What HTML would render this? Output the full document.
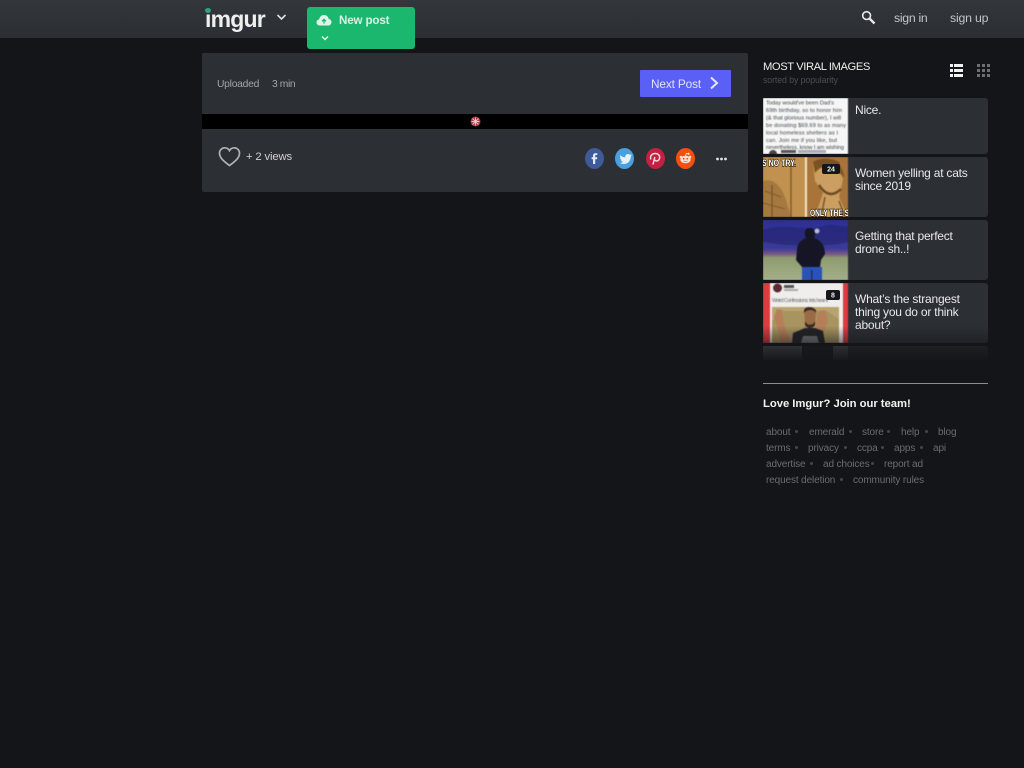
<!DOCTYPE html>
<html><head><meta charset="utf-8"><title>imgur</title>
<style>
html,body{margin:0;padding:0;width:1024px;height:768px;overflow:hidden;background:#141518;font-family:"Liberation Sans",sans-serif}
.a{position:absolute;white-space:nowrap}
svg{position:absolute;display:block}
.card{position:absolute;left:763px;width:225px;background:#2c2f34;border-radius:0 3px 3px 0;overflow:hidden}
.t{position:absolute;left:92px;top:5px;font-size:12px;line-height:13px;color:#e8e9ea;letter-spacing:-.22px;white-space:nowrap}
.f{font-size:10px;color:#6a6c70;letter-spacing:-.12px;line-height:13px}
.d{position:absolute;width:3px;height:3px;border-radius:50%;background:#44464a}
.b{filter:blur(.4px)}
</style></head><body>
<div class="a" style="left:0;top:0;width:1024px;height:38px;background:linear-gradient(#33363b,#2b2e33)"></div>

<!-- logo -->
<div class="a" style="left:205px;top:6px;font-size:23px;font-weight:bold;color:#eef0ee;letter-spacing:-.8px;line-height:26px">imgur</div>
<div class="a" style="left:205px;top:8px;width:6px;height:5px;border-radius:50%;background:#2fa37a"></div>
<svg style="left:276px;top:13px" width="11" height="9" viewBox="0 0 11 9"><path d="M1.5 2 L5.5 6 L9.5 2" fill="none" stroke="#dfe0e1" stroke-width="1.6"/></svg>

<!-- new post -->
<div class="a" style="left:307px;top:7px;width:108px;height:42px;background:#1bb76e;border-radius:3px"></div>
<svg style="left:316px;top:14px" width="16" height="12" viewBox="0 0 16 12"><path d="M4 11.5C1.7 11.5.5 10 .5 8.4.5 6.8 1.6 5.6 3.1 5.4 3.6 2.7 5.6 1 8 1c2.400 0 4.300 1.600 4.800 4 1.600.1 2.700 1.500 2.700 3.100 0 1.800-1.300 3.400-3.300 3.400z" fill="#dff3e8"/><path d="M8 9.500V5.500M6 7.300L8 5.300 10 7.300" fill="none" stroke="#1bb76e" stroke-width="1.300"/></svg>
<div class="a" style="left:339px;top:13px;font-size:11.6px;font-weight:bold;color:#d9f2e4;line-height:15px;letter-spacing:-.15px">New post</div>
<svg style="left:321px;top:35px" width="8" height="7" viewBox="0 0 8 7"><path d="M1 1.500L4 4.500 7 1.500" fill="none" stroke="#e6f6ee" stroke-width="1.400"/></svg>

<!-- top right -->
<svg style="left:861px;top:10px" width="15" height="15" viewBox="0 0 15 15"><circle cx="5.600" cy="5.600" r="3.900" fill="none" stroke="#e8e9ea" stroke-width="1.600"/><path d="M8.500 8.500L13.500 13.500" stroke="#e8e9ea" stroke-width="2.300"/></svg>
<div class="a" style="left:894px;top:11px;font-size:12.300px;color:#c3c5c8;line-height:15px;letter-spacing:-.3px">sign in</div>
<div class="a" style="left:950px;top:11px;font-size:12.300px;color:#c3c5c8;line-height:15px;letter-spacing:-.2px">sign up</div>

<!-- main panel -->
<div class="a" style="left:202px;top:53px;width:546px;height:139px;background:#2c2f34;border-radius:2px"></div>
<div class="a" style="left:217px;top:78px;font-size:10.300px;color:#a3a5a8;line-height:13px;letter-spacing:-.25px">Uploaded</div>
<div class="a" style="left:272px;top:78px;font-size:10.300px;color:#a3a5a8;line-height:13px;letter-spacing:-.4px">3 min</div>
<div class="a" style="left:640px;top:70px;width:91px;height:27px;background:#5a5ff5;border-radius:1px"></div>
<div class="a" style="left:651px;top:77px;font-size:11.800px;color:#e3e4fb;line-height:15px;letter-spacing:-.12px">Next Post</div>
<svg style="left:709px;top:76px" width="11" height="14" viewBox="0 0 11 14"><path d="M2 1.500L8 7 2 12.500" fill="none" stroke="#e6e7fd" stroke-width="2"/></svg>
<div class="a" style="left:202px;top:114px;width:546px;height:15px;background:#000"></div>
<svg style="left:470px;top:116px" width="11" height="11" viewBox="0 0 11 11"><circle cx="5.500" cy="5.500" r="5" fill="#a83c45"/><path d="M2.500 2.500L8.500 8.500M8.500 2.500L2.500 8.500M5.500 1.500V9.500M1.500 5.500H9.500" stroke="#e6c4c6" stroke-width=".9"/></svg>

<svg style="left:218px;top:146px" width="23" height="21" viewBox="0 0 23 21"><path d="M11.500 19.500C7 16 1.500 12.300 1.500 7.200 1.500 4 4 1.800 6.700 1.800c2 0 3.800 1 4.800 2.800 1-1.800 2.800-2.800 4.800-2.800 2.700 0 5.200 2.200 5.200 5.400 0 5.100-5.500 8.800-10 12.300z" fill="none" stroke="#b0b2b4" stroke-width="1.700"/></svg>
<div class="a" style="left:246px;top:150px;font-size:11.300px;color:#d0d1d3;line-height:15px;letter-spacing:-.15px">+ 2 views</div>

<div class="a" style="left:585px;top:148px;width:19px;height:21px;border-radius:50%;background:#3f5a98"></div>
<div class="a" style="left:615px;top:148px;width:19px;height:21px;border-radius:50%;background:#4a9fe0"></div>
<div class="a" style="left:646px;top:148px;width:19px;height:21px;border-radius:50%;background:#c4203f"></div>
<div class="a" style="left:676px;top:148px;width:19px;height:21px;border-radius:50%;background:#f2500f"></div>
<svg style="left:585px;top:148px" width="110" height="21" viewBox="0 0 110 21">
<path d="M10.200 16V11.200H12L12.300 9.200H10.200V8C10.200 7.300 10.500 7 11.200 7H12.300V5.300H10.500C8.700 5.300 8 6.300 8 7.800V9.200H6.600V11.200H8V16z" fill="#e6eaf4"/>
<path d="M35.500 7.500C37 8.700 38.500 9.300 40.200 9.300 40 7.300 41.500 6 43 6c.8 0 1.400.3 1.900.8l1.700-.6-.9 1.500 1.100-.3-1 1.200c0 4.200-3 7.400-7.200 7.400-1.500 0-2.800-.4-4-1.200 1.400.1 2.500-.2 3.600-1-1.200-.1-2-.7-2.400-1.700h1.100c-1.300-.5-2-1.500-2-2.800l1.100.3c-1.100-.8-1.300-2-.5-3.100z" fill="#e3f1fb"/>
<path d="M68 16.500L69.800 9M66 11.500C64.500 8.500 66.800 5.500 70.200 5.500 73.200 5.500 75 7.500 74.600 10 74.200 12.300 72.300 13.300 70.800 12.800 69.900 12.500 69.500 11.800 69.400 11.200" fill="none" stroke="#f4d5db" stroke-width="1.500"/>
<ellipse cx="100.500" cy="11.500" rx="5.200" ry="3.800" fill="#fbe0d3"/>
<circle cx="105" cy="9" r="1.300" fill="#fbe0d3"/><circle cx="96" cy="9" r="1.300" fill="#fbe0d3"/><circle cx="103.500" cy="5.800" r="1.100" fill="#fbe0d3"/>
<path d="M100.500 8L101.300 5.500 103.500 5.800" fill="none" stroke="#fbe0d3" stroke-width=".8"/>
<circle cx="98.700" cy="10.800" r=".9" fill="#f2500f"/><circle cx="102.300" cy="10.800" r=".9" fill="#f2500f"/>
<path d="M98.500 13C100 14 101 14 102.500 13" fill="none" stroke="#f2500f" stroke-width=".7"/>
</svg>
<svg style="left:716px;top:157px" width="11" height="4" viewBox="0 0 11 4"><circle cx="1.500" cy="2" r="1.400" fill="#e4e5e6"/><circle cx="5.500" cy="2" r="1.400" fill="#e4e5e6"/><circle cx="9.500" cy="2" r="1.400" fill="#e4e5e6"/></svg>

<!-- sidebar -->
<div class="a" style="left:763px;top:60px;font-size:11.200px;color:#eceded;line-height:14px;letter-spacing:-.4px">MOST VIRAL IMAGES</div>
<div class="a" style="left:763px;top:74px;font-size:8.800px;color:#4b4d51;line-height:12px;letter-spacing:-.1px">sorted by popularity</div>
<svg style="left:950px;top:64px" width="41" height="13" viewBox="0 0 41 13">
<g fill="#f0f1f1"><rect x="0" y="0" width="3" height="3"/><rect x="4" y="0" width="9" height="3"/><rect x="0" y="5" width="3" height="3"/><rect x="4" y="5" width="9" height="3"/><rect x="0" y="10" width="3" height="3"/><rect x="4" y="10" width="9" height="3"/></g>
<g fill="#6d6f72"><rect x="27" y="0" width="3" height="3"/><rect x="32" y="0" width="3" height="3"/><rect x="37" y="0" width="3" height="3"/><rect x="27" y="5" width="3" height="3"/><rect x="32" y="5" width="3" height="3"/><rect x="37" y="5" width="3" height="3"/><rect x="27" y="10" width="3" height="3"/><rect x="32" y="10" width="3" height="3"/><rect x="37" y="10" width="3" height="3"/></g>
</svg>

<div class="card" style="top:98px;height:56px">
<svg class="b" style="left:0;top:0" width="85" height="56" viewBox="0 0 85 56"><rect width="85" height="56" fill="#f6f6f6"/>
<g font-family="Liberation Sans" font-size="5.600" fill="#3e4044"><text x="3" y="6.500" textLength="68">Today would've been Dad's</text><text x="3" y="14" textLength="76">69th birthday, so to honor him</text><text x="3" y="21.500" textLength="75">(&amp; that glorious number), I will</text><text x="3" y="29" textLength="80">be donating $69.69 to as many</text><text x="3" y="36.500" textLength="72">local homeless shelters as I</text><text x="3" y="44" textLength="71">can. Join me if you like, but</text><text x="3" y="51" textLength="78">nevertheless, know I am wishing</text></g>
<circle cx="10" cy="56" r="4" fill="#444"/><rect x="18" y="52" width="15" height="3" fill="#555"/><rect x="35" y="52" width="28" height="3" fill="#a8aab4"/></svg>
<div class="t" style="top:6px">Nice.</div></div>

<div class="card" style="top:157px;height:60px">
<svg class="b" style="left:0;top:0" width="85" height="60" viewBox="0 0 85 60"><rect x="0" y="0" width="42" height="60" fill="#c1924f"/><rect x="42" y="0" width="43" height="60" fill="#a9743a"/><rect x="42" y="0" width="2" height="60" fill="#f3e5cd"/>
<path d="M0 24C10 20 20 30 24 46L28 60H0z" fill="#a67940"/><path d="M9 28V60M28 10V60" stroke="#7a5628" stroke-width="1.300"/><path d="M2 34L18 40M0 46L22 52" stroke="#7d5a2e" stroke-width="1"/>
<path d="M50 6L70 4 80 22 76 40 85 60H52L60 36 52 24z" fill="#cb9f62"/><path d="M50 5C56 1 66 0 76 5L82 20 74 14C66 8 58 8 52 16z" fill="#7a5224"/><path d="M56 28C62 38 70 40 78 32" stroke="#6d4a20" stroke-width="2.500" fill="none"/><path d="M62 40L58 60M76 44L82 60" stroke="#7a5628" stroke-width="1.500"/></svg>
<svg style="left:0;top:0" width="85" height="60" viewBox="0 0 85 60">
<g font-family="Liberation Sans" font-weight="bold" font-size="9" fill="#fff" stroke="#2d2010" stroke-width="1.400" paint-order="stroke" lengthAdjust="spacingAndGlyphs"><text x="-1" y="9" textLength="34" lengthAdjust="spacingAndGlyphs">S NO TRY.</text><text x="47" y="59" textLength="39" lengthAdjust="spacingAndGlyphs">ONLY THE S</text></g>
<rect x="59" y="7" width="18" height="10" rx="2" fill="#15161a"/><text x="68" y="14.500" font-family="Liberation Sans" font-weight="bold" font-size="7" fill="#f0f0f0" text-anchor="middle">24</text></svg>
<div class="t" style="top:10px">Women yelling at cats<br>since 2019</div></div>

<div class="card" style="top:220px;height:60px">
<svg class="b" style="left:0;top:0" width="85" height="60" viewBox="0 0 85 60"><defs><linearGradient id="s" x1="0" y1="0" x2="0" y2="1"><stop offset="0" stop-color="#2d2e98"/><stop offset=".48" stop-color="#3c3a98"/><stop offset=".57" stop-color="#7a5a80"/><stop offset=".63" stop-color="#8f9c70"/><stop offset="1" stop-color="#a3ae88"/></linearGradient></defs><rect width="85" height="60" fill="url(#s)"/>
<path d="M0 10C20 2 40 12 60 6 70 3 80 8 85 6V22C60 28 25 26 0 22z" fill="#24256e" opacity=".65"/>
<path d="M33 40L34 30C34 24 38 20 43 18 41 14 41 8 47 8 52 8 53 14 51 18 58 20 62 26 62 34L58 40 57 47H39z" fill="#151525"/>
<rect x="39" y="47" width="20" height="13" fill="#2a52b8"/><rect x="48" y="50" width="1.500" height="10" fill="#1c2f70"/><circle cx="54" cy="11" r="2.500" fill="#b8b8d0"/></svg>
<div class="t" style="top:10px">Getting that perfect<br>drone sh..!</div></div>

<div class="card" style="top:283px;height:60px">
<svg class="b" style="left:0;top:0" width="85" height="60" viewBox="0 0 85 60"><rect width="85" height="60" fill="#f0eeec"/><rect x="0" y="0" width="7" height="60" fill="#dc3c40"/><rect x="80" y="0" width="5" height="60" fill="#dc3c40"/>
<circle cx="14.500" cy="5" r="4.500" fill="#5a2a30"/><rect x="21" y="2" width="10" height="3" fill="#555"/><rect x="21" y="6" width="14" height="2" fill="#aaa"/>
<text x="9" y="19" font-family="Liberation Sans" font-size="5.200" fill="#66686b" textLength="56">Weird Confessions: lets hear it</text>
<rect x="9" y="24" width="67" height="36" fill="#a8945f"/><path d="M9 24H76V36L64 28H20L9 38z" fill="#b9a470"/>
<path d="M11 34L14 26 19 27 20 36 24 50 28 60H18L14 44z" fill="#b57f5a"/><path d="M53 40L55 28 62 27 65 38 60 50 53 50z" fill="#b57f5a"/>
<path d="M41 27C45 24 52 25 53 30L52 38C51 44 44 45 42 39z" fill="#9a6b45"/><path d="M41 30C44 26 51 26 53 30L53 27C49 23 43 23 41 27z" fill="#3a2a20"/><path d="M42 38C44 43 50 43 52 38L52 42C50 46 44 46 42 42z" fill="#3a2a20"/>
<path d="M29 60L30 50 42 45H52L60 48 62 60z" fill="#232327"/><path d="M38 60L40 53H54L56 60z" fill="#77777b"/>
</svg>
<svg style="left:0;top:0" width="85" height="60" viewBox="0 0 85 60"><rect x="63" y="7" width="14" height="10" rx="2" fill="#15161a"/><text x="70" y="14.500" font-family="Liberation Sans" font-weight="bold" font-size="7" fill="#f0f0f0" text-anchor="middle">8</text></svg>
<div class="t" style="top:10px">What’s the strangest<br>thing you do or think<br>about?</div></div>

<div class="card" style="top:346px;height:14px"><svg style="left:0;top:0" width="85" height="14"><rect width="85" height="14" fill="#55565a"/><rect x="39" y="0" width="31" height="14" fill="#1c1d20"/></svg></div>
<div class="a" style="left:763px;top:326px;width:225px;height:36px;background:linear-gradient(rgba(20,21,24,0),rgba(20,21,24,.5) 45%,#141518)"></div>

<div class="a" style="left:763px;top:383px;width:225px;height:1px;background:#8b8d90"></div>
<div class="a" style="left:763px;top:397px;font-size:11.300px;font-weight:bold;color:#f2f2f3;line-height:14px;letter-spacing:-.04px">Love Imgur? Join our team!</div>

<div class="a f" style="left:766px;top:426px">about</div><div class="d" style="left:795px;top:430px"></div>
<div class="a f" style="left:809px;top:426px">emerald</div><div class="d" style="left:849px;top:430px"></div>
<div class="a f" style="left:862px;top:426px">store</div><div class="d" style="left:887px;top:430px"></div>
<div class="a f" style="left:901px;top:426px">help</div><div class="d" style="left:925px;top:430px"></div>
<div class="a f" style="left:938px;top:426px">blog</div>

<div class="a f" style="left:766px;top:442px">terms</div><div class="d" style="left:795px;top:446px"></div>
<div class="a f" style="left:808px;top:442px">privacy</div><div class="d" style="left:844px;top:446px"></div>
<div class="a f" style="left:857px;top:442px">ccpa</div><div class="d" style="left:881px;top:446px"></div>
<div class="a f" style="left:894px;top:442px">apps</div><div class="d" style="left:920px;top:446px"></div>
<div class="a f" style="left:933px;top:442px">api</div>

<div class="a f" style="left:766px;top:458px">advertise</div><div class="d" style="left:810px;top:462px"></div>
<div class="a f" style="left:823px;top:458px">ad choices</div><div class="d" style="left:871px;top:462px"></div>
<div class="a f" style="left:884px;top:458px">report ad</div>

<div class="a f" style="left:766px;top:474px">request deletion</div><div class="d" style="left:840px;top:478px"></div>
<div class="a f" style="left:853px;top:474px">community rules</div>
</body></html>
